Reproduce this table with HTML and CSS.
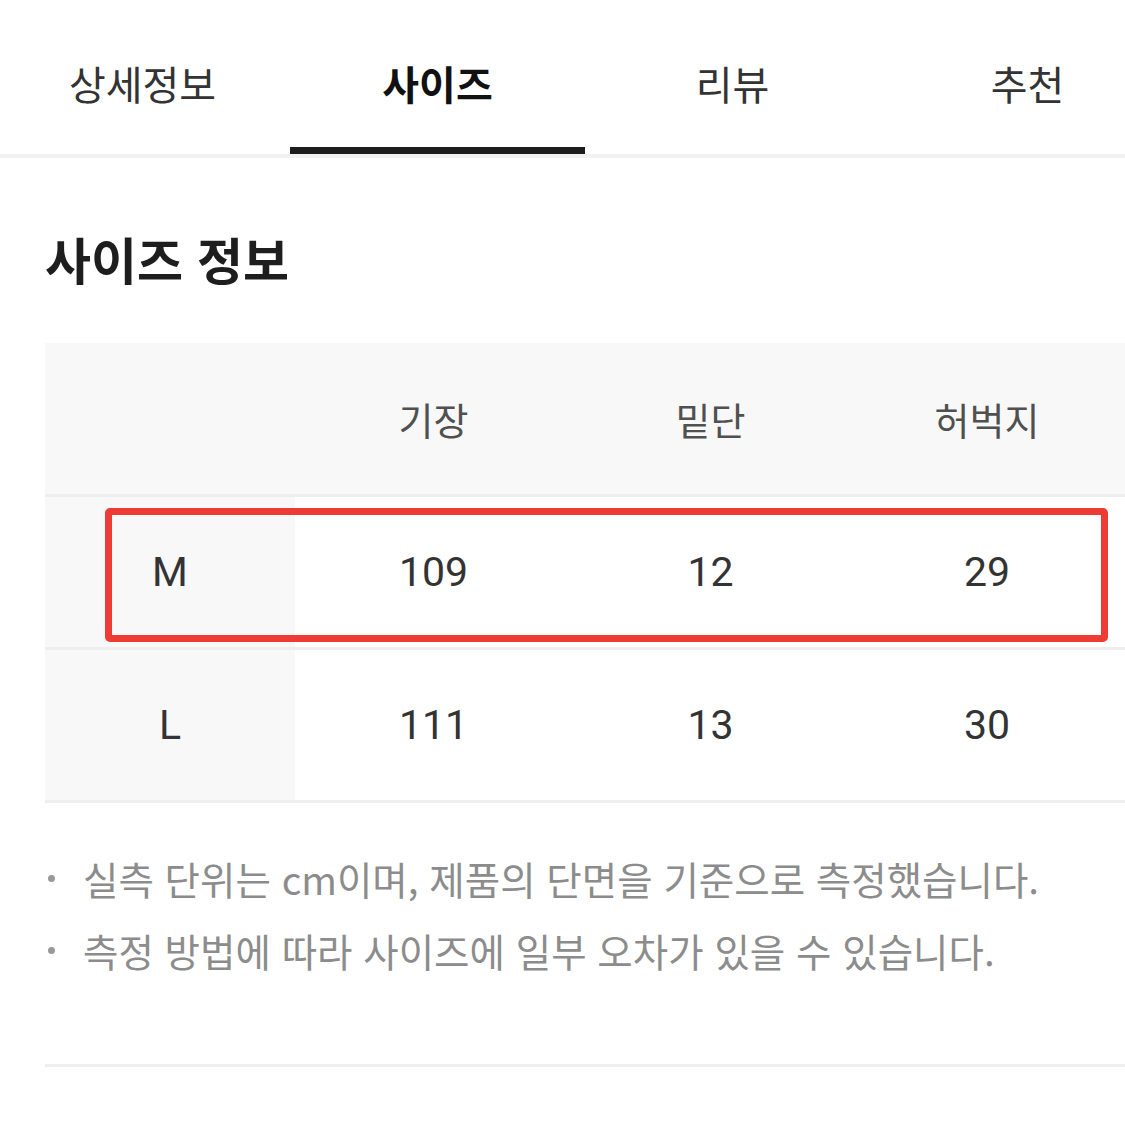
FILE: index.html
```html
<!DOCTYPE html>
<html lang="ko">
<head>
<meta charset="utf-8">
<title>사이즈 정보</title>
<link rel="stylesheet" href="styles.css">
</head>
<body>
<nav class="tabs">
  <div class="tab">상세정보</div>
  <div class="tab active">사이즈</div>
  <div class="tab">리뷰</div>
  <div class="tab">추천</div>
</nav>

<section class="size-info">
  <h2 class="title">사이즈 정보</h2>

  <div class="size-table">
    <div class="row head">
      <div class="cell label"></div>
      <div class="cell">기장</div>
      <div class="cell">밑단</div>
      <div class="cell">허벅지</div>
    </div>
    <div class="row">
      <div class="cell label val">M</div>
      <div class="cell val">109</div>
      <div class="cell val">12</div>
      <div class="cell val">29</div>
    </div>
    <div class="row">
      <div class="cell label val">L</div>
      <div class="cell val">111</div>
      <div class="cell val">13</div>
      <div class="cell val">30</div>
    </div>
    <div class="highlight"></div>
  </div>

  <ul class="notes">
    <li>실측 단위는 cm이며, 제품의 단면을 기준으로 측정했습니다.</li>
    <li>측정 방법에 따라 사이즈에 일부 오차가 있을 수 있습니다.</li>
  </ul>

  <div class="divider"></div>
</section>
</body>
</html>
```

FILE: styles.css
```css
html, body {
  margin: 0;
  padding: 0;
  background: #ffffff;
  overflow: hidden;
}

body {
  width: 1125px;
  height: 1125px;
  font-family: "Noto Sans CJK KR", "Noto Sans", sans-serif;
  color: #222;
}

.tabs {
  display: flex;
  margin-left: -5px;
  width: 1130px;
  border-bottom: 4px solid #f1f1f1;
}

.tab {
  flex: 0 0 295px;
  box-sizing: border-box;
  height: 154px;
  padding-top: 63px;
  text-align: center;
  font-size: 40px;
  line-height: 1;
  color: #333;
  border-bottom: 7px solid transparent;
}

.tab.active {
  font-weight: 700;
  color: #111;
  border-bottom-color: #1c1c1c;
}

.size-info {
  padding-left: 45px;
}

.title {
  margin: 75px 0 0 0;
  font-size: 50px;
  line-height: 1;
  font-weight: 700;
  color: #1e1e1e;
}

.size-table {
  position: relative;
  margin-top: 60px;
  width: 1080px;
}

.row {
  display: grid;
  grid-template-columns: 250px 277px 277px 276px;
  height: 150px;
  border-bottom: 3px solid #eeeeee;
}

.row.head {
  height: 151px;
  background: #f8f8f8;
}

.cell {
  display: flex;
  align-items: center;
  justify-content: center;
  font-size: 38px;
  line-height: 1;
  color: #505050;
}

.cell.label {
  background: #f8f8f8;
}

.cell.val {
  font-family: Roboto, "Liberation Sans", "Noto Sans CJK KR", sans-serif;
  font-size: 41px;
  color: #333;
}

.highlight {
  position: absolute;
  left: 60px;
  top: 165px;
  width: 1003px;
  height: 134px;
  box-sizing: border-box;
  border: 7px solid #ef3b36;
  border-radius: 5px;
}

.notes {
  list-style: none;
  margin: 39px 0 0 0;
  padding: 0;
}

.notes li {
  position: relative;
  padding-left: 38px;
  height: 72px;
  font-size: 38.5px;
  line-height: 72px;
  color: #8c8c8c;
  white-space: nowrap;
}

.notes li::before {
  content: "";
  position: absolute;
  left: 3px;
  top: 33px;
  width: 7px;
  height: 7px;
  border-radius: 50%;
  background: #999999;
}

.divider {
  margin-top: 78px;
  height: 3px;
  background: #eeeeee;
}
```
